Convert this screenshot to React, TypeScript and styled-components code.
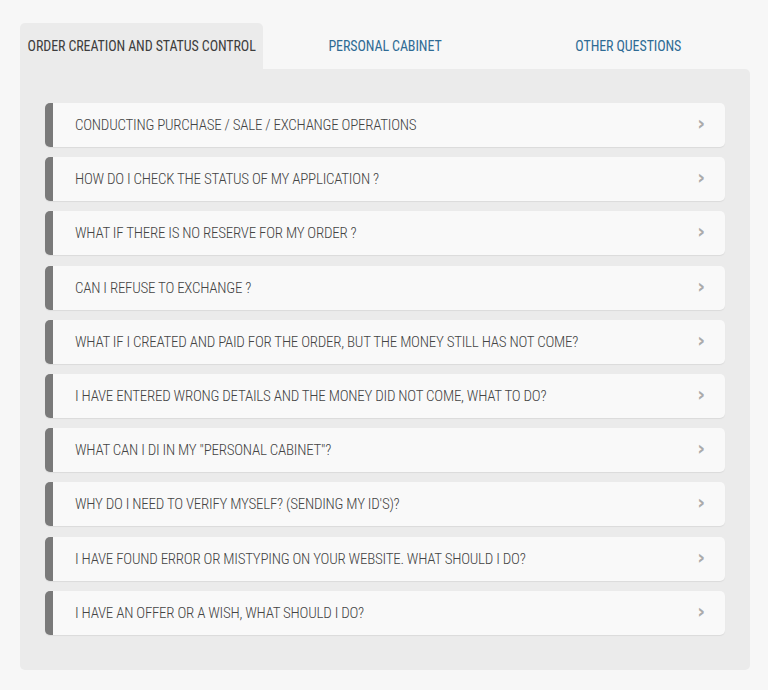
import React, { useState } from 'react';
import styled, { createGlobalStyle } from 'styled-components';

const GlobalStyle = createGlobalStyle`
  body {
    margin: 0;
    background: #f7f7f7;
    font-family: 'Roboto Condensed', Roboto, sans-serif;
  }
`;

const Wrapper = styled.div`
  padding: 23px 18px 20px 20px;
`;

const TabList = styled.div`
  display: grid;
  grid-template-columns: repeat(3, 1fr);
  height: 46px;
`;

const Tab = styled.button<{ $active: boolean }>`
  border: 0;
  border-radius: 5px 5px 0 0;
  background: ${(p) => (p.$active ? '#ebebeb' : 'transparent')};
  color: ${(p) => (p.$active ? '#3d3d3d' : '#2f6b94')};
  font-family: 'Roboto Condensed', Roboto, sans-serif;
  font-size: 14px;
  font-weight: 400;
  letter-spacing: -0.1px;
  text-align: center;
  padding: 0;
  cursor: pointer;
`;

const Panel = styled.div`
  background: #ebebeb;
  border-radius: 0 5px 5px 5px;
  padding: 34px 25px 35px;
  display: flex;
  flex-direction: column;
  gap: 10.2px;
`;

const Question = styled.div`
  display: flex;
  align-items: center;
  height: 44px;
  background: #f9f9f9;
  border-left: 8px solid #7a7a7a;
  border-radius: 5px;
  box-shadow: 0 1px 1px rgba(0, 0, 0, 0.07);
  padding: 0 20px 0 22px;
  cursor: pointer;
`;

const Title = styled.span`
  flex: 1;
  font-size: 15px;
  font-weight: 300;
  letter-spacing: -0.25px;
  color: #444;
  white-space: nowrap;
`;

const Chevron = styled.span`
  font-family: 'DejaVu Sans', sans-serif;
  font-size: 19px;
  font-weight: 700;
  color: #ababab;
  line-height: 1;
  padding-bottom: 3px;
`;

const tabs = ['ORDER CREATION AND STATUS CONTROL', 'PERSONAL CABINET', 'OTHER QUESTIONS'];

const questions = [
  'CONDUCTING PURCHASE / SALE / EXCHANGE OPERATIONS',
  'HOW DO I CHECK THE STATUS OF MY APPLICATION ?',
  'WHAT IF THERE IS NO RESERVE FOR MY ORDER ?',
  'CAN I REFUSE TO EXCHANGE ?',
  'WHAT IF I CREATED AND PAID FOR THE ORDER, BUT THE MONEY STILL HAS NOT COME?',
  'I HAVE ENTERED WRONG DETAILS AND THE MONEY DID NOT COME, WHAT TO DO?',
  'WHAT CAN I DI IN MY "PERSONAL CABINET"?',
  "WHY DO I NEED TO VERIFY MYSELF? (SENDING MY ID'S)?",
  'I HAVE FOUND ERROR OR MISTYPING ON YOUR WEBSITE. WHAT SHOULD I DO?',
  'I HAVE AN OFFER OR A WISH, WHAT SHOULD I DO?',
];

export default function App() {
  const [active, setActive] = useState(0);

  return (
    <>
      <GlobalStyle />
      <Wrapper>
        <TabList>
          {tabs.map((t, i) => (
            <Tab key={t} $active={i === active} onClick={() => setActive(i)}>
              {t}
            </Tab>
          ))}
        </TabList>
        <Panel>
          {questions.map((q) => (
            <Question key={q}>
              <Title>{q}</Title>
              <Chevron>›</Chevron>
            </Question>
          ))}
        </Panel>
      </Wrapper>
    </>
  );
}
